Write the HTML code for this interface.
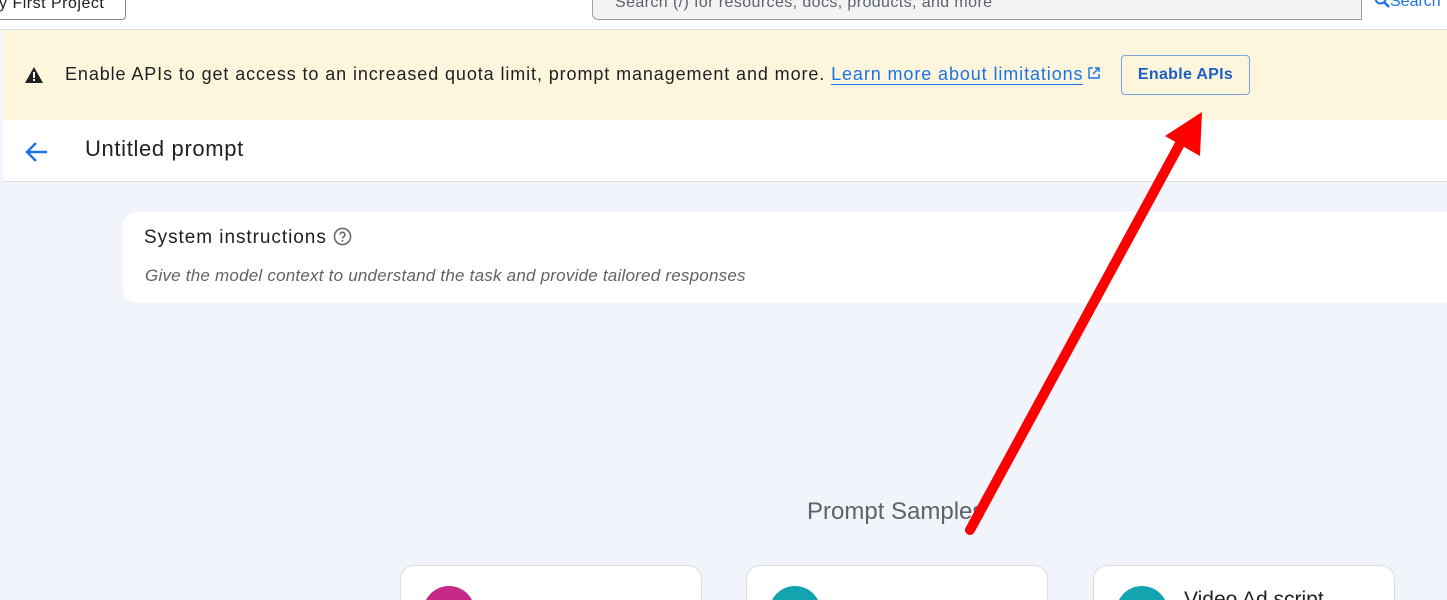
<!DOCTYPE html>
<html style="overflow:hidden;height:600px"><head><style>
body{margin:0;width:1447px;height:600px;overflow:hidden;background:#f1f4fb;font-family:"Liberation Sans",sans-serif;position:relative}
.top{position:absolute;left:0;top:0;width:1447px;height:29px;background:#fff;border-bottom:1px solid #dadce0;overflow:hidden}
.proj{position:absolute;left:-10px;top:-12px;width:136px;height:32px;border:1px solid #80868b;border-radius:4px;font-size:16px;color:#202124;line-height:30px;padding-left:8px;box-sizing:border-box;letter-spacing:0.5px}
.search{position:absolute;left:592px;top:-12px;width:770px;height:32px;background:#f1f3f4;border:1px solid #9aa0a6;border-radius:0 0 0 6px;font-size:16px;color:#5f6368;line-height:28px;padding-left:22px;box-sizing:border-box;letter-spacing:0.4px}
.sbtn{position:absolute;left:1368px;top:-12px;width:79px;height:32px;color:#1a73e8;font-size:16px;line-height:28px;padding-left:6px;box-sizing:border-box;overflow:hidden;white-space:nowrap}
.banner{position:absolute;left:3px;top:30px;width:1444px;height:90px;background:#fdf6dd}
.banner .t{position:absolute;left:62px;top:34px;font-size:18px;color:#202124;letter-spacing:0.9px;white-space:nowrap}
.banner a{color:#1a73e8;text-decoration:none;border-bottom:1px solid #1a73e8}
.btn{position:absolute;left:1118px;top:25px;width:129px;height:40px;border:1px solid #7aa4e0;border-radius:4px;box-sizing:border-box;color:#1a5fc7;font-size:16px;font-weight:bold;text-align:center;line-height:38px;letter-spacing:0.3px}
.hdr{position:absolute;left:3px;top:120px;width:1444px;height:61px;background:#fff;border-bottom:1px solid #dadce0}
.hdr .t{position:absolute;left:82px;top:16px;font-size:22px;color:#202124;letter-spacing:0.65px}
.card{position:absolute;left:123px;top:212px;width:1324px;height:91px;background:#fff;border-radius:14px 0 0 14px}
.ps{position:absolute;left:807px;top:498px;font-size:24px;color:#5f6368}
.s{position:absolute;top:565px;width:302px;height:35px;background:#fff;border:1px solid #dadce0;border-bottom:none;border-radius:14px 14px 0 0;overflow:hidden;box-sizing:border-box}
.c{position:absolute;left:22px;top:20px;width:52px;height:52px;border-radius:50%}
</style></head><body>
<div class="top"><div class="proj">y First Project</div><div class="search">Search (/) for resources, docs, products, and more</div><div class="sbtn"><svg width="16" height="16" viewBox="0 0 16 16" style="vertical-align:-2px"><circle cx="6.5" cy="6.5" r="5" stroke="#1a73e8" stroke-width="2" fill="none"/><path d="M10 10l5 5" stroke="#1a73e8" stroke-width="2.4"/></svg>Search</div></div>
<div class="banner">
<svg style="position:absolute;left:21px;top:36px" width="20" height="18" viewBox="0 0 20 18"><path d="M10 1 L19 17 H1 Z" fill="#202124"/><rect x="9" y="6" width="2" height="6" fill="#fdf6dd"/><rect x="9" y="13" width="2" height="2" fill="#fdf6dd"/></svg>
<div class="t">Enable APIs to get access to an increased quota limit, prompt management and more. <a>Learn more about limitations</a><svg width="14" height="14" viewBox="0 0 14 14" style="margin-left:4px;vertical-align:0"><path d="M6 2H2v10h10V8M8 2h4v4M12 2L6 8" stroke="#1a73e8" stroke-width="1.4" fill="none"/></svg></div>
<div class="btn">Enable APIs</div></div>
<div class="hdr"><svg style="position:absolute;left:22px;top:21px" width="24" height="22" viewBox="0 0 24 22"><path d="M22 11H3M11 2L2 11l9 9" stroke="#1a73e8" stroke-width="2.4" fill="none"/></svg><div class="t">Untitled prompt</div></div>
<div class="card"><div style="position:absolute;left:21px;top:15px;font-size:19px;color:#202124;letter-spacing:0.95px">System instructions <svg width="19" height="19" viewBox="0 0 20 20" style="vertical-align:-3px"><circle cx="10" cy="10" r="8.5" stroke="#5f6368" stroke-width="1.6" fill="none"/><path d="M7.5 8a2.5 2.5 0 1 1 3.5 2.3c-.8.4-1 .9-1 1.7" stroke="#5f6368" stroke-width="1.6" fill="none"/><circle cx="10" cy="14.5" r="1" fill="#5f6368"/></svg></div>
<div style="position:absolute;left:22px;top:54px;font-size:17px;font-style:italic;color:#5f6368;letter-spacing:0.22px">Give the model context to understand the task and provide tailored responses</div></div>
<div class="ps">Prompt Samples</div>
<div class="s" style="left:400px"><div class="c" style="background:#c52a87"></div></div>
<div class="s" style="left:746px"><div class="c" style="background:#12a4af"></div></div>
<div class="s" style="left:1093px"><div class="c" style="background:#12a4af"></div><div style="position:absolute;left:90px;top:22px;font-size:21px;color:#202124">Video Ad script</div></div>
<svg style="position:absolute;left:0;top:0" width="1447" height="600"><line x1="970" y1="530" x2="1182" y2="140" stroke="#f00" stroke-width="10" stroke-linecap="round"/><path d="M1202 112 L1165 136 L1200 156 Z" fill="#f00"/></svg>
</body></html>
